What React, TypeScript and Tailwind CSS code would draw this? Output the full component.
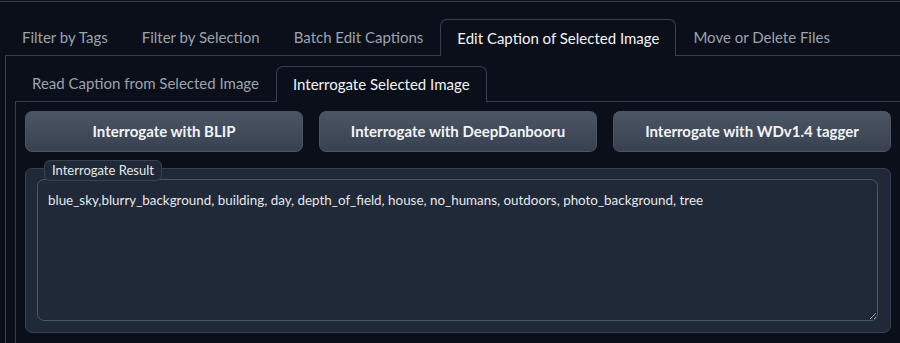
import React from "react";

const font = { fontFamily: '"Source Sans Pro", Lato, "Noto Sans", sans-serif' };

function Tab({ label, active }: { label: string; active?: boolean }) {
  return active ? (
    <div className="relative -mb-px flex h-[37px] items-center rounded-t-[7px] border border-b-0 border-[#374151] bg-[#0b0f19] px-[16px] text-[15px] text-[#f3f4f6]">
      {label}
    </div>
  ) : (
    <div className="flex h-[36px] items-center px-[17px] text-[15px] text-[#9ca3af]">{label}</div>
  );
}

function InnerTab({ label, active }: { label: string; active?: boolean }) {
  return active ? (
    <div className="relative -mb-px flex h-[36px] items-center rounded-t-[7px] border border-b-0 border-[#374151] bg-[#0b0f19] px-[16px] text-[15px] text-[#f3f4f6]">
      {label}
    </div>
  ) : (
    <div className="flex h-[35px] items-center px-[17px] text-[15px] text-[#9ca3af]">{label}</div>
  );
}

function Btn({ label }: { label: string }) {
  return (
    <div className="flex h-[41px] items-center justify-center rounded-[7px] border border-[#4b5563] bg-gradient-to-b from-[#4b5563] to-[#374151] text-[15px] font-bold text-[#f3f4f6]">
      {label}
    </div>
  );
}

export default function App() {
  return (
    <div className="h-[343px] w-[900px] overflow-hidden bg-[#0b0f19]" style={font}>
      <div className="mt-px border-t border-[#374151] pl-[5px] pt-[17px]">
        <div className="flex items-end">
          <Tab label="Filter by Tags" />
          <Tab label="Filter by Selection" />
          <Tab label="Batch Edit Captions" />
          <Tab label="Edit Caption of Selected Image" active />
          <Tab label="Move or Delete Files" />
        </div>
        <div className="border-l border-t border-[#374151] pl-[9px] pt-[10px]">
          <div className="flex items-end">
            <InnerTab label="Read Caption from Selected Image" />
            <InnerTab label="Interrogate Selected Image" active />
          </div>
          <div className="h-[260px] border-l border-t border-[#374151] pl-[9px] pr-[9px] pt-[9px]">
            <div className="grid grid-cols-3 gap-x-[16px]">
              <Btn label="Interrogate with BLIP" />
              <Btn label="Interrogate with DeepDanbooru" />
              <Btn label="Interrogate with WDv1.4 tagger" />
            </div>
            <div className="relative mt-[16px] h-[165px] rounded-[7px] border border-[#374151] bg-[#1f2937] pb-[11px] pl-[11px] pr-[12px] pt-[10px]">
              <div className="absolute -top-[9px] left-[18px] flex h-[21px] items-center rounded-[6px] border border-[#374151] bg-[#1f2937] px-[7px] text-[13px] text-[#e5e7eb]">
                Interrogate Result
              </div>
              <textarea
                className="block h-full w-full resize-y rounded-[7px] border border-[#4b5563] bg-[#1f2937] px-[10px] py-[9px] text-[13.4px] leading-[22px] text-[#e5e7eb] outline-none"
                style={{ ...font, colorScheme: "dark" }}
                defaultValue="blue_sky,blurry_background, building, day, depth_of_field, house, no_humans, outdoors, photo_background, tree"
              />
            </div>
          </div>
        </div>
      </div>
    </div>
  );
}
